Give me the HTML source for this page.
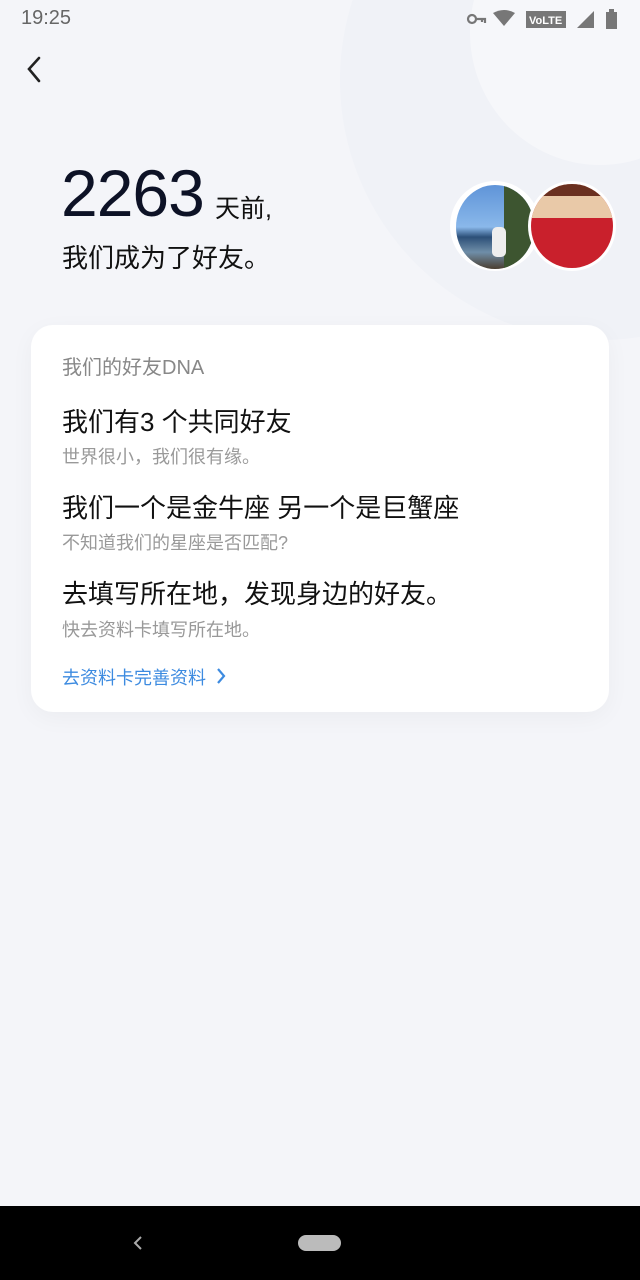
<!DOCTYPE html>
<html><head><meta charset="utf-8"><style>
*{margin:0;padding:0;box-sizing:border-box}
body{width:640px;height:1280px;background:#f4f5f9;position:relative;overflow:hidden;font-family:"Liberation Sans","Noto Sans CJK SC",sans-serif}
.a{position:absolute}
.circ{position:absolute;left:340px;top:-180px;width:520px;height:520px;border-radius:50%;background:#f0f2f7}
.circ2{position:absolute;left:470px;top:-100px;width:260px;height:265px;border-radius:50%;background:#f6f7fa}
.card{position:absolute;left:31px;top:325px;width:578px;height:387px;background:#fff;border-radius:22px;box-shadow:0 6px 24px rgba(0,0,0,0.04)}
.t{position:absolute;left:31px;white-space:nowrap}
.big{font-size:26px;color:#111}
.sm{font-size:18px;color:#999}
</style></head><body>
<div class="circ"></div><div class="circ2"></div>
<div class="a" style="left:21px;top:7px;font-size:20px;color:#666">19:25</div>
<svg class="a" style="left:465px;top:8px" width="160" height="22">
<circle cx="7" cy="11" r="4" fill="none" stroke="#777" stroke-width="2.2"/><path d="M11 11h9v4M17 11v3" stroke="#777" stroke-width="2.2" fill="none"/>
<path d="M28 5 Q39 -1 50 5 L39 18 Z" fill="#777"/>
<rect x="61" y="3" width="40" height="17" fill="#777"/><text x="64" y="16" font-size="11" font-weight="bold" fill="#fff" font-family="Liberation Sans">VoLTE</text>
<path d="M112 20 L129 3 L129 20 Z" fill="#777"/>
<rect x="141" y="4" width="11" height="17" fill="#777"/><rect x="144" y="1" width="5" height="3" fill="#777"/>
</svg>
<svg class="a" style="left:24px;top:55px" width="20" height="30"><path d="M15 3 L5 14 L15 26" stroke="#222" stroke-width="2.6" fill="none" stroke-linecap="round"/></svg>
<div class="a" style="left:61px;top:155px;font-size:66px;color:#0d1226;letter-spacing:-1px">2263</div>
<div class="a" style="left:215px;top:189px;font-size:25px;color:#111">天前,</div>
<div class="a" style="left:62px;top:238px;font-size:26px;color:#111">我们成为了好友。</div>
<div class="a" style="left:450px;top:181px;width:90px;height:90px;border-radius:50%;background:#fff"></div>
<div class="a" style="left:456px;top:185px;width:78px;height:84px;border-radius:50%;overflow:hidden;background:linear-gradient(#5f94d8 0%,#8ab8ea 50%,#2c4f78 62%,#6f8ea8 80%,#4a3e30 100%)"><div style="position:absolute;left:48px;top:0;width:40px;height:90px;background:#3d5530"></div><div style="position:absolute;left:36px;top:42px;width:14px;height:30px;background:#eee;border-radius:5px"></div></div>
<div class="a" style="left:528px;top:181px;width:88px;height:90px;border-radius:50%;background:#fff"></div>
<div class="a" style="left:531px;top:184px;width:82px;height:84px;border-radius:50%;overflow:hidden;background:#c9202c"><div style="position:absolute;left:0;top:0;width:82px;height:34px;background:#e9c9a8"></div><div style="position:absolute;left:0;top:0;width:82px;height:12px;background:#6a3020"></div></div>
<div class="card">
<div class="t" style="top:26px;font-size:20px;color:#888">我们的好友DNA</div>
<div class="t big" style="top:77px">我们有3 个共同好友</div>
<div class="t sm" style="top:118px">世界很小，我们很有缘。</div>
<div class="t big" style="top:163px">我们一个是金牛座 另一个是巨蟹座</div>
<div class="t sm" style="top:204px">不知道我们的星座是否匹配?</div>
<div class="t big" style="top:249px">去填写所在地，发现身边的好友。</div>
<div class="t sm" style="top:291px">快去资料卡填写所在地。</div>
<div class="t" style="top:339px;font-size:18px;color:#3d8be0">去资料卡完善资料</div>
<svg class="a" style="left:183px;top:341px" width="14" height="20"><path d="M4 3 L10 10 L4 17" stroke="#3d8be0" stroke-width="2.2" fill="none"/></svg>
</div>
<div class="a" style="left:0;top:1206px;width:640px;height:74px;background:#000"></div>
<svg class="a" style="left:130px;top:1234px" width="16" height="20"><path d="M11 3 L5 9 L11 15" stroke="#aaa" stroke-width="2" fill="none"/></svg>
<div class="a" style="left:298px;top:1235px;width:43px;height:16px;border-radius:8px;background:#bbb"></div>
</body></html>
